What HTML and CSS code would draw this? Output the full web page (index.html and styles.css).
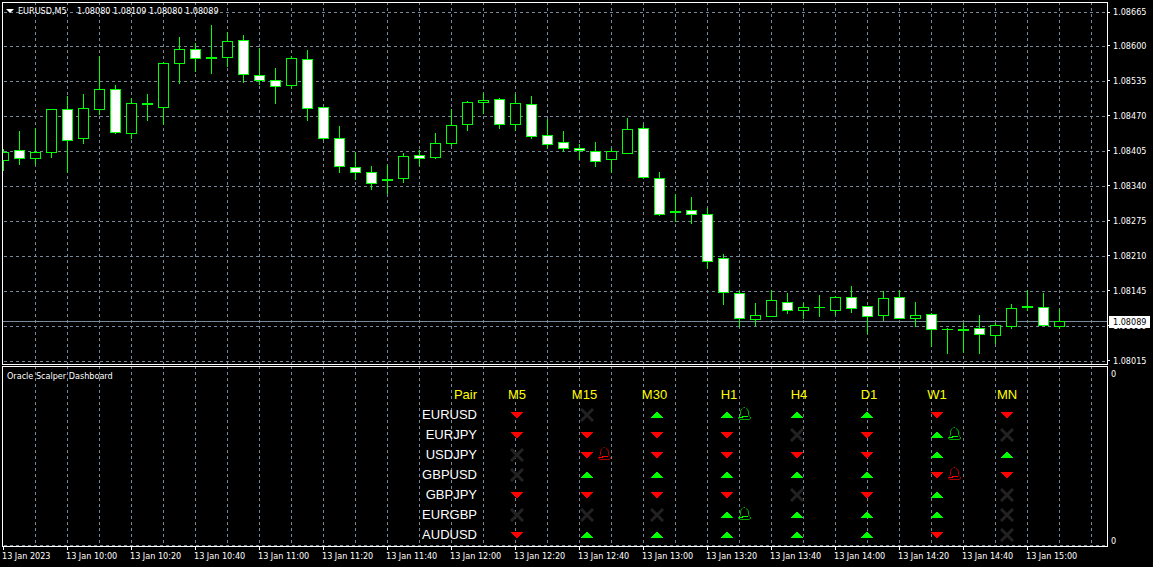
FILE: index.html
```html
<!DOCTYPE html>
<html lang="en">
<head>
  <meta charset="UTF-8" />
  <meta name="viewport" content="width=device-width, initial-scale=1.0"/>
  <title>EURUSD,M5</title>
  <link rel="stylesheet" href="styles.css">
</head>
<body>
  <svg class="sprite" width="0" height="0" aria-hidden="true">
    <symbol id="up" viewBox="0 0 12 6"><path d="M0 6V5H1V4H2V3H3V2H4V1H5V0H7V1H8V2H9V3H10V4H11V5H12V6Z" /></symbol>
    <symbol id="down" viewBox="0 0 12 6"><path d="M0 0V1H1V2H2V3H3V4H4V5H5V6H7V5H8V4H9V3H10V2H11V1H12V0Z" /></symbol>
    <symbol id="none" viewBox="0 0 14 14"><path d="M1 1L13 13M13 1L1 13" fill="none" stroke="currentColor" stroke-width="3" /></symbol>
    <symbol id="bell" viewBox="0 0 13 13">
      <path d="M5.5 .5H7M4.5 1.5Q2.5 2.5 2.5 5V7.5L1.5 9.5M8 1.5Q10.5 2.5 10.5 5V7.5L11.5 9.5M.5 10V11.5L2 12.5H11L12.5 11.5V10" fill="none" stroke="currentColor" opacity=".65" />
      <path d="M1 10.5H5M4 9.5H10" fill="none" stroke="currentColor" />
    </symbol>
  </svg>

  <main class="terminal">
    <section class="pane chart">
      <svg class="plot" id="chart">
        <defs>
          <pattern id="grid" x="32" y="5" width="32" height="6" patternUnits="userSpaceOnUse">
            <rect width="1" height="3" class="dash" />
          </pattern>
        </defs>
        <rect x="32" width="100%" height="100%" fill="url(#grid)" />
      </svg>
      <header class="symbol">
        <button type="button" aria-label="One click trading">
          <svg width="8" height="4"><path d="M0 0H8L4 4Z" /></svg>
        </button>
        <h1>EURUSD,M5&nbsp;&nbsp;&nbsp; 1.08080 1.08109 1.08080 1.08089</h1>
      </header>
    </section>
    <aside class="prices">
      <ul id="prices"></ul>
      <strong class="last">1.08089</strong>
    </aside>

    <section class="pane dashboard">
      <svg class="plot">
        <rect x="32" width="100%" height="100%" fill="url(#grid)" />
        <line x1="0" x2="100%" y1="178.5" y2="178.5" class="grid-line" />
      </svg>
      <h2>Oracle Scalper Dashboard</h2>
      <table>
        <thead>
          <tr>
            <th>Pair</th>
            <th>M5</th>
            <th class="long">M15</th>
            <th class="long">M30</th>
            <th class="high">H1</th>
            <th class="high">H4</th>
            <th class="high">D1</th>
            <th>W1</th>
            <th>MN</th>
          </tr>
        </thead>
        <tbody id="signals"></tbody>
      </table>
    </section>
    <aside class="levels">
      <span>0</span>
      <span>0</span>
    </aside>

    <ul class="times" id="times"></ul>
  </main>

  <script src="script.js"></script>
</body>
</html>
```

FILE: styles.css
```css
body {
  margin: 0;
  padding: 2px 0 0 2px;
  background: #000;
  color: #fff;
  font-family: 'DejaVu Sans Condensed', 'DejaVu Sans', sans-serif;
  font-size: 9px;
  line-height: 12px;
}

h1, h2, ul {
  margin: 0;
  padding: 0;
  font-size: 9px;
  font-weight: normal;
  list-style: none;
}

.sprite {
  position: absolute;
}

.terminal {
  display: grid;
  grid-template-columns: minmax(0, 1fr) 45px;
}

.pane {
  position: relative;
  box-sizing: border-box;
  border: 1px solid #fff;
  overflow: hidden;
}

.chart {
  height: 363px;
  margin-bottom: 1px;
}

.plot {
  position: absolute;
  inset: 0;
  width: 100%;
  height: 100%;
  shape-rendering: crispEdges;
}

.dash {
  fill: #778899;
}

.grid-line {
  stroke: #778899;
  stroke-dasharray: 3 3;
  stroke-dashoffset: -1;
}

.last-line {
  stroke: #778899;
}

.wick {
  stroke: #00ff00;
}

.candle {
  fill: #000;
  stroke: #00ff00;
}

.candle.bear {
  fill: #fff;
}

.symbol {
  position: relative;
  display: flex;
  align-items: center;
  gap: 4px;
  padding: 2px 3px;
}

.symbol button {
  display: flex;
  padding: 0;
  border: none;
  background: none;
  cursor: pointer;
}

.symbol path {
  fill: #fff;
}

.prices {
  position: relative;
  height: 363px;
}

.prices li {
  display: flex;
  align-items: center;
  height: 35px;
}

.prices li:first-child {
  height: 20px;
  padding-bottom: 6px;
}

.prices li::before {
  content: '';
  width: 2px;
  height: 1px;
  margin-right: 3px;
  background: #fff;
}

.last {
  position: absolute;
  top: 314px;
  left: 1px;
  width: 37px;
  padding-left: 4px;
  background: #fff;
  color: #000;
  font-weight: normal;
}

.dashboard h2 {
  position: relative;
  padding: 3px 4px;
}

.dashboard table {
  position: relative;
  margin: 0 0 1px 409px;
  border-collapse: collapse;
  table-layout: fixed;
  width: 630px;
  font-family: 'Liberation Sans', Arial, sans-serif;
  font-size: 13px;
  line-height: 20px;
}

.dashboard th,
.dashboard td {
  position: relative;
  height: 20px;
  padding: 0;
  font-weight: normal;
  text-align: center;
}

.dashboard thead th {
  color: #ffff00;
}

.dashboard th.long {
  padding-right: 5px;
}

.dashboard th.high {
  padding-left: 4px;
}

.dashboard tr th:first-child {
  padding-right: 5px;
  text-align: right;
}

.dashboard td svg {
  display: block;
  margin: 0 auto;
  fill: currentColor;
}

.up {
  color: #00ff00;
}

.down {
  color: #ff0000;
}

.none {
  color: #222;
}

.dashboard td .bell {
  position: absolute;
  top: 2px;
  left: 46px;
}

.levels {
  display: flex;
  flex-direction: column;
  justify-content: space-between;
  padding: 2px 3px 0;
}

.times {
  display: flex;
  overflow: hidden;
}

.times li {
  flex: 0 0 64px;
  white-space: nowrap;
}

.times li::before {
  content: '';
  display: block;
  width: 1px;
  height: 3px;
  margin-left: 1px;
  background: #fff;
}
```

FILE: script.js
```javascript
const chart = document.getElementById('chart');
const priceList = document.getElementById('prices');
const timeList = document.getElementById('times');
const signalRows = document.getElementById('signals');

const STEP = 16;

const prices = ['1.08665', '1.08600', '1.08535', '1.08470', '1.08405', '1.08340',
  '1.08275', '1.08210', '1.08145', '1.08080', '1.08015'];
const gridRows = [9, 43, 78, 113, 148, 183, 218, 253, 288, 323, 358];
const lastRow = 318;

// high, body top, body bottom, low, 1 = bear candle
const candles = [
  [149, 152, 160, 170, 0], [131, 150, 158, 164, 1], [128, 152, 158, 164, 0],
  [109, 109, 152, 157, 0], [96, 109, 140, 172, 1], [94, 108, 138, 143, 0],
  [56, 89, 109, 114, 0], [85, 89, 132, 133, 1], [98, 103, 133, 138, 0],
  [94, 103, 104, 120, 0], [62, 63, 107, 124, 0], [37, 49, 63, 83, 0],
  [43, 49, 58, 71, 1], [25, 57, 58, 73, 0], [32, 41, 57, 66, 0],
  [35, 40, 74, 82, 1], [48, 75, 80, 84, 1], [68, 80, 86, 103, 1],
  [56, 58, 85, 88, 0], [50, 59, 108, 120, 1], [107, 107, 138, 139, 1],
  [126, 138, 166, 172, 1], [152, 167, 172, 179, 1], [166, 172, 183, 189, 1],
  [165, 179, 180, 193, 0], [153, 156, 178, 182, 0], [150, 155, 158, 165, 1],
  [133, 143, 157, 158, 0], [109, 125, 143, 145, 0], [101, 102, 124, 130, 0],
  [93, 100, 102, 113, 0], [98, 99, 124, 128, 1], [94, 103, 124, 130, 0],
  [96, 104, 136, 138, 1], [119, 135, 144, 148, 1], [131, 142, 148, 151, 1],
  [144, 148, 150, 159, 1], [142, 151, 161, 166, 1], [148, 151, 159, 172, 0],
  [118, 129, 153, 153, 0], [125, 128, 177, 178, 1], [172, 178, 214, 215, 1],
  [194, 211, 212, 221, 0], [197, 210, 214, 223, 1], [208, 214, 261, 268, 1],
  [254, 258, 292, 304, 1], [291, 293, 318, 326, 1], [303, 315, 319, 325, 0],
  [290, 300, 316, 316, 0], [293, 302, 310, 313, 1], [303, 307, 310, 318, 0],
  [295, 307, 307, 316, 0], [296, 297, 310, 314, 0], [286, 297, 308, 312, 1],
  [306, 306, 316, 333, 1], [291, 298, 315, 320, 0], [290, 297, 318, 318, 1],
  [302, 315, 318, 326, 0], [313, 314, 329, 346, 1], [328, 329, 329, 353, 0],
  [323, 329, 330, 352, 0], [315, 328, 334, 353, 1], [323, 325, 335, 343, 0],
  [304, 308, 326, 328, 0], [290, 306, 307, 310, 0], [293, 307, 325, 325, 1],
  [309, 321, 326, 328, 0]
];

const times = ['2023', '10:00', '10:20', '10:40', '11:00', '11:20', '11:40', '12:00',
  '12:20', '12:40', '13:00', '13:20', '13:40', '14:00', '14:20', '14:40', '15:00'];

// u = up, d = down, x = no signal, * = alert
const signals = {
  EURUSD: 'd x u u* u u d d',
  EURJPY: 'd d d d x d u* x',
  USDJPY: 'x d* d d d d u u',
  GBPUSD: 'x u u u u u d* d',
  GBPJPY: 'd d d d x d u x',
  EURGBP: 'x x x u* u u u x',
  AUDUSD: 'd u u u u u d x'
};

function draw(parent, name, attrs) {
  const node = document.createElementNS('http://www.w3.org/2000/svg', name);
  Object.entries(attrs).forEach(([key, value]) => node.setAttribute(key, value));
  parent.appendChild(node);
  return node;
}

function drawChart() {
  gridRows.forEach(y => {
    draw(chart, 'line', { class: 'grid-line', x1: 0, x2: '100%', y1: y + 0.5, y2: y + 0.5 });
  });
  draw(chart, 'line', { class: 'last-line', x1: 0, x2: '100%', y1: lastRow + 0.5, y2: lastRow + 0.5 });

  // candle rows are counted from the window, the plot starts 3px lower
  const group = draw(chart, 'g', { transform: 'translate(0 -3)' });
  candles.forEach(([high, top, bottom, low, bear], i) => {
    const x = i * STEP + 0.5;
    draw(group, 'line', { class: 'wick', x1: x, x2: x, y1: high, y2: low + 1 });
    if (top === bottom) {
      draw(group, 'line', { class: 'wick', x1: x - 5.5, x2: x + 5.5, y1: top + 0.5, y2: top + 0.5 });
    } else {
      draw(group, 'rect', {
        class: bear ? 'candle bear' : 'candle',
        x: x - 5, y: top + 0.5, width: 10, height: bottom - top
      });
    }
  });
}

function icon(name, width, height, extra = '') {
  return `<svg class="${extra}" width="${width}" height="${height}"><use href="#${name}" /></svg>`;
}

function signalCell(code) {
  const name = { u: 'up', d: 'down', x: 'none' }[code[0]];
  const mark = name === 'none' ? icon(name, 14, 14) : icon(name, 12, 6);
  const bell = code.endsWith('*') ? icon('bell', 13, 13, 'bell') : '';
  return `<td class="${name}">${mark}${bell}</td>`;
}

function renderLists() {
  priceList.innerHTML = prices.map(price => `<li>${price}</li>`).join('');
  timeList.innerHTML = times.map(time => `<li>13 Jan ${time}</li>`).join('');
  signalRows.innerHTML = Object.entries(signals).map(([pair, codes]) => `
    <tr><th scope="row">${pair}</th>${codes.split(' ').map(signalCell).join('')}</tr>
  `).join('');
}

drawChart();
renderLists();
```
